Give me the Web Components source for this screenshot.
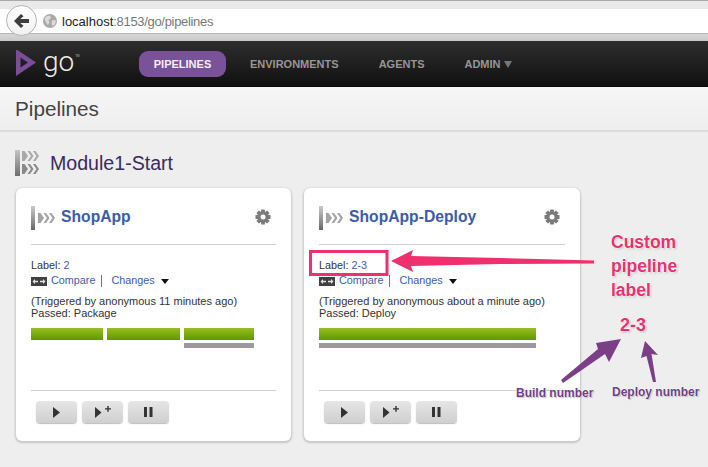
<!DOCTYPE html>
<html>
<head>
<meta charset="utf-8">
<title>Pipelines</title>
<style>
  html, body { margin: 0; padding: 0; }
  body {
    width: 708px; height: 467px; overflow: hidden; position: relative;
    background: #eeeeee; font-family: "Liberation Sans", Arial, sans-serif;
  }
</style>
</head>
<body>
<browser-bar url-host="localhost" url-path=":8153/go/pipelines"></browser-bar>
<go-header></go-header>
<page-title>Pipelines</page-title>
<pipeline-group name="Module1-Start">
  <pipeline-card name="ShopApp" label="2" trigger="(Triggered by anonymous 11 minutes ago)" passed="Passed: Package" stages="72,73,70" running="2" width="275"></pipeline-card>
  <pipeline-card name="ShopApp-Deploy" label="2-3" trigger="(Triggered by anonymous about a minute ago)" passed="Passed: Deploy" stages="217" running="0" width="276"></pipeline-card>
</pipeline-group>
<call-outs></call-outs>

<script>
// Barra del navegador
class BrowserBar extends HTMLElement {
  connectedCallback() {
    const root = this.attachShadow({mode: "open"});
    root.innerHTML = `
      <style>
        :host { display: block; height: 41px; box-sizing: border-box; background: #e9e9e9; border-top: 1px solid #a9a9a9; padding-top: 8px; }
        .field { height: 25px; box-sizing: border-box; background: #fff; border-bottom: 1px solid #b5b5b5; display: flex; align-items: center; padding-left: 43px; gap: 5px; position: relative; }
        .shade { height: 7px; background: linear-gradient(#d6d6d6, #c9c9c9); }
        .back { position: absolute; left: 6px; top: -4px; width: 31px; height: 31px; box-sizing: border-box; border-radius: 50%; background: linear-gradient(#fff, #f0f0f0); border: 1px solid #b4b4b4; display: flex; align-items: center; justify-content: center; }
        .url { font: 13px "Liberation Sans", Arial, sans-serif; color: #777; letter-spacing: -.32px; }
        .url b { font-weight: normal; color: #222; letter-spacing: 0; }
      </style>
      <div class="field">
        <div class="back">
          <svg width="15" height="14" viewBox="0 0 15 14"><path d="M7 0 L9.500 2.200 L6.200 5 H15 V9 H6.200 L9.500 11.800 L7 14 L0 7 Z" fill="#3d3d3d"/></svg>
        </div>
        <svg width="14" height="14" viewBox="0 0 14 14">
          <circle cx="7" cy="7" r="7" fill="#a9a9a9"/>
          <path d="M3 2.500 L7 1.500 L8 4 L5.500 6 L6.500 8.500 L4.500 11 L2.500 7.500 L1.500 5 Z M9.500 6 L13 6.500 L12 10.500 L9.500 12 L8.500 9 Z" fill="#dcdcdc"/>
        </svg>
        <span class="url"><b>${this.getAttribute("url-host")}</b>${this.getAttribute("url-path")}</span>
      </div>
      <div class="shade"></div>`;
  }
}

// Cabecera oscura con el logo y el menu
class GoHeader extends HTMLElement {
  connectedCallback() {
    const root = this.attachShadow({mode: "open"});
    root.innerHTML = `
      <style>
        :host { display: flex; align-items: center; height: 46px; box-sizing: border-box; background: linear-gradient(#2e2e2e, #101010); border-bottom: 1px solid #0a0a0a; font-family: "Liberation Sans", Arial, sans-serif; }
        .logo { width: 139px; display: flex; align-items: center; padding-left: 15px; box-sizing: border-box; height: 100%; }
        .go { font: 300 28px/1 Roboto, Inter, sans-serif; color: #ececec; margin: -3px 0 0 7px; }
        .tm { font-size: 3px; color: #bbb; align-self: flex-start; margin: 13px 0 0 1px; }
        nav { display: flex; align-items: center; font-size: 11px; font-weight: bold; color: #969696; }
        .active { background: #7a5299; color: #f4eef8; border-radius: 9px; width: 87px; height: 26px; display: flex; align-items: center; justify-content: center; margin-right: 24px; }
        .item { margin-right: 40px; }
        .caret { display: inline-block; width: 0; height: 0; border: 4px solid transparent; border-top: 7px solid #777; border-bottom: 0; margin-left: 3px; }
      </style>
      <div class="logo">
        <svg width="21" height="27" viewBox="0 0 21 27"><path fill-rule="evenodd" d="M1 0 L21 13.500 L1 27 Z M5.500 8.500 V18.500 L13 13.500 Z" fill="#7a4f98" transform="translate(0 -1)"/></svg>
        <span class="go">go</span><span class="tm">TM</span>
      </div>
      <nav>
        <span class="active">PIPELINES</span>
        <span class="item">ENVIRONMENTS</span>
        <span class="item">AGENTS</span>
        <span class="item">ADMIN<i class="caret"></i></span>
      </nav>`;
  }
}

class PageTitle extends HTMLElement {
  connectedCallback() {
    const root = this.attachShadow({mode: "open"});
    root.innerHTML = `
      <style>
        :host { display: block; height: 45px; box-sizing: border-box; padding: 10px 0 0 15px; background: linear-gradient(#f6f6f6, #eeeeee); border-bottom: 2px solid #dcdcdc; font: 20.700px/24px "Liberation Sans", Arial, sans-serif; color: #444; }
      </style>
      <slot></slot>`;
  }
}

// Iconos de flechas repetidos
const chevrons = (fill) => `
  <path d="M0 0 H2.500 L6 5 L2.500 10 H0 L0 10 Z M5.500 0 H8 L11.500 5 L8 10 H5.500 L9 5 Z M11 0 H13.500 L17 5 L13.500 10 H11 L14.500 5 Z" fill="${fill}"/>`;

class PipelineGroup extends HTMLElement {
  connectedCallback() {
    const root = this.attachShadow({mode: "open"});
    root.innerHTML = `
      <style>
        :host { display: block; padding: 18px 0 0 15px; }
        .head { display: flex; align-items: center; gap: 11px; height: 26px; margin-bottom: 12px; font: 19.600px/26px "Liberation Sans", Arial, sans-serif; color: #3b2a5c; }
        .cards { display: flex; gap: 13px; padding-left: 1px; }
      </style>
      <div class="head">
        <svg width="24" height="26" viewBox="0 0 24 26">
          <defs><linearGradient id="g" x1="0" x2="0" y1="0" y2="1"><stop offset="0" stop-color="#c4c4c4"/><stop offset="1" stop-color="#6e6e6e"/></linearGradient></defs>
          <rect width="5" height="26" fill="url(#g)"/>
          <g transform="translate(7 1)">${chevrons("#a9a9a9")}</g>
          <g transform="translate(7 14)">${chevrons("#8a8a8a")}</g>
        </svg>
        <span>${this.getAttribute("name")}</span>
      </div>
      <div class="cards"><slot></slot></div>`;
  }
}

class PipelineCard extends HTMLElement {
  connectedCallback() {
    const stages = this.getAttribute("stages").split(",").map(Number);
    const running = Number(this.getAttribute("running"));
    const bars = stages.map((w, i) => `
      <div class="stage" style="width:${w}px">
        <div class="bar"></div>
        ${i === running ? '<div class="under"></div>' : ''}
      </div>`).join("");
    const root = this.attachShadow({mode: "open"});
    root.innerHTML = `
      <style>
        :host { display: block; box-sizing: border-box; width: ${this.getAttribute("width")}px; height: 253px; background: #fff; border-radius: 6px; box-shadow: 0 1px 2px 1px #c6c6c6; padding: 18px 15px 0; font: 10.800px/11.500px "Liberation Sans", Arial, sans-serif; color: #333; }
        a { color: #3c5caa; text-decoration: none; }
        .title { display: flex; align-items: center; height: 24px; padding-bottom: 14px; border-bottom: 1px solid #cfcfcf; }
        .title svg.pipe { margin-right: 6px; }
        .title a { font-size: 15.700px; font-weight: bold; flex: 1; margin-top: -3px; }
        .title svg.gear { margin: -3px 5px 0 0; }
        .label { margin-top: 15px; height: 12px; }
        .links { display: flex; align-items: center; margin-top: 2px; height: 14px; }
        .cmp { margin-right: 4px; }
        .sep { border-left: 1px solid #777; height: 12px; margin: 0 9px 0 6px; }
        .tri { width: 0; height: 0; border: 4.500px solid transparent; border-top: 5px solid #111; border-bottom: 0; margin-left: 6px; }
        .info { margin-top: 8px; font-size: 11px; }
        .stages { display: flex; gap: 4px; margin-top: 9px; height: 20px; }
        .bar { height: 12px; background: linear-gradient(#97bf20, #5f9700); }
        .under { height: 5px; margin-top: 3px; background: #9c9a9c; }
        .foot { margin-top: 42px; border-top: 1px solid #cfcfcf; padding: 10px 0 0 5px; display: flex; gap: 5px; }
        button { width: 41px; height: 22px; padding: 0; border: 0; border-radius: 4px; background: linear-gradient(#e6e6e6, #cfcfcf); box-shadow: 0 1px 1px #bdbdbd; display: flex; align-items: center; justify-content: center; }
      </style>
      <div class="title">
        <svg class="pipe" width="24" height="24" viewBox="0 0 24 24">
          <defs><linearGradient id="b" x1="0" x2="0" y1="0" y2="1"><stop offset="0" stop-color="#c8c8c8"/><stop offset="1" stop-color="#6a6a6a"/></linearGradient></defs>
          <rect width="4" height="24" fill="url(#b)"/>
          <g transform="translate(7 7)">${chevrons("#a3a3a3")}</g>
        </svg>
        <a>${this.getAttribute("name")}</a>
        <svg class="gear" width="16" height="16" viewBox="-8 -8 16 16">
          <g fill="#7b7b7b">
            <rect x="-1.900" y="-7.500" width="3.800" height="15" rx=".5"/>
            <rect x="-1.900" y="-7.500" width="3.800" height="15" rx=".5" transform="rotate(45)"/>
            <rect x="-1.900" y="-7.500" width="3.800" height="15" rx=".5" transform="rotate(90)"/>
            <rect x="-1.900" y="-7.500" width="3.800" height="15" rx=".5" transform="rotate(135)"/>
            <circle r="5.800"/>
          </g>
          <circle r="2.500" fill="#fff"/>
        </svg>
      </div>
      <div class="label">Label: <a>${this.getAttribute("label")}</a></div>
      <div class="links">
        <svg class="cmp" width="16" height="9" viewBox="0 0 16 9">
          <rect width="16" height="9" fill="#404040"/>
          <path d="M1.500 4.500 L4 2 V3.700 H7 V5.300 H4 V7 Z M14.500 4.500 L12 2 V3.700 H9 V5.300 H12 V7 Z" fill="#e4e4e4"/>
        </svg>
        <a>Compare</a><span class="sep"></span><a>Changes</a><span class="tri"></span>
      </div>
      <div class="info">${this.getAttribute("trigger")}<br>${this.getAttribute("passed")}</div>
      <div class="stages">${bars}</div>
      <div class="foot">
        <button><svg width="7" height="11" viewBox="0 0 7 11"><path d="M0 0 L7 5.500 L0 11 Z" fill="#333"/></svg></button>
        <button><svg width="16" height="12" viewBox="0 0 16 12"><path d="M0 1 L6.500 6.500 L0 12 Z" fill="#333"/><path d="M10 2.200 H12.300 V0 H13.700 V2.200 H16 V3.600 H13.700 V5.800 H12.300 V3.600 H10 Z" fill="#333"/></svg></button>
        <button><svg width="9" height="10" viewBox="0 0 9 10"><rect width="3" height="10" fill="#333"/><rect x="5.500" width="3" height="10" fill="#333"/></svg></button>
      </div>`;
  }
}

// Anotaciones dibujadas encima de la captura
class CallOuts extends HTMLElement {
  connectedCallback() {
    const root = this.attachShadow({mode: "open"});
    root.innerHTML = `
      <style>
        :host { position: absolute; left: 0; top: 0; width: 708px; height: 467px; display: block; pointer-events: none; font-family: "Liberation Sans", Arial, sans-serif; font-weight: bold; }
        svg { position: absolute; left: 0; top: 0; }
        .pink { position: absolute; color: #e8316f; text-shadow: 0 0 2px #fff, 0 0 2px #fff, 0 0 2px #fff, 1px 1px 2px #aaa; }
        .custom { left: 611px; top: 230px; font-size: 17.500px; line-height: 24px; }
        .num { left: 620px; top: 315px; font-size: 18px; line-height: 21px; }
        .note { position: absolute; color: #6e3f85; font-size: 12px; line-height: 14px; text-shadow: 0 0 2px #fff, 0 0 2px #fff, 1px 1px 1px #aaa; }
        .build { left: 516px; top: 386px; }
        .deploy { left: 612px; top: 385px; }
      </style>
      <svg width="708" height="467" viewBox="0 0 708 467">
        <rect x="310.500" y="251.500" width="76.500" height="23" fill="none" stroke="#f0306e" stroke-width="3"/>
        <path d="M391 261 L413 250 L411 256 L500 258 L594 260.500 V263.500 L500 264 L411 266 L413 272 Z" fill="#f0306e"/>
        <path d="M621 339 L609 362 L605 354 L563 383 L561 380 L598 349 L596 343 Z" fill="#7b3f87"/>
        <path d="M645 341 L658 355 L651.500 354 L656 382 L653 382 L646.500 356 L641 358 Z" fill="#7b3f87"/>
      </svg>
      <div class="pink custom">Custom<br>pipeline<br>label</div>
      <div class="pink num">2-3</div>
      <div class="note build">Build number</div>
      <div class="note deploy">Deploy number</div>`;
  }
}

customElements.define("browser-bar", BrowserBar);
customElements.define("go-header", GoHeader);
customElements.define("page-title", PageTitle);
customElements.define("pipeline-group", PipelineGroup);
customElements.define("pipeline-card", PipelineCard);
customElements.define("call-outs", CallOuts);
</script>
</body>
</html>
